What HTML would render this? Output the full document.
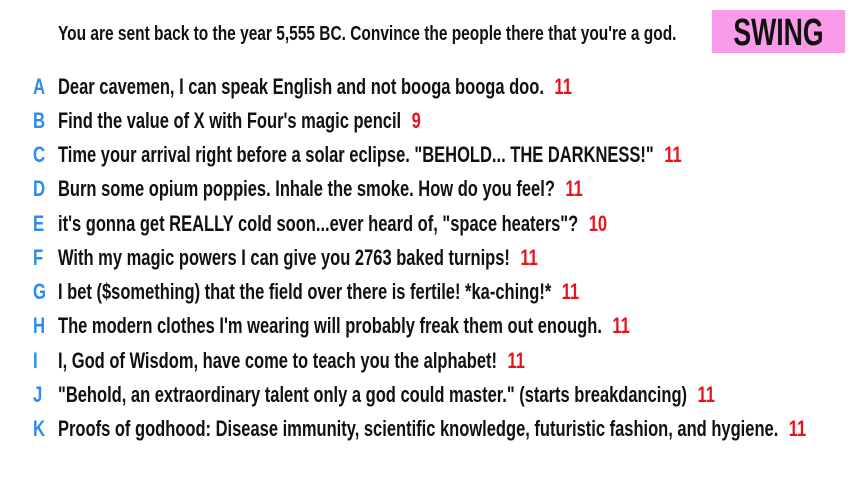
<!DOCTYPE html>
<html><head><meta charset="utf-8"><style>
body{margin:0;width:853px;height:480px;background:#fff;overflow:hidden;position:relative;font-family:"Liberation Sans",sans-serif;}
.t{position:absolute;left:58px;white-space:nowrap;transform-origin:left center;transform:scaleX(0.75);color:#111;font-weight:bold;}
.h{top:23px;font-size:20px;transform:scaleX(0.774);}
.swing{position:absolute;left:712px;top:10px;width:133px;height:43px;background:#f99be8;}
.swing span{position:absolute;left:0;width:133px;text-align:center;top:2px;font-size:38px;font-weight:bold;color:#111;transform:scaleX(0.7);transform-origin:center;}
.l{position:absolute;left:33px;color:#2a8bf2;font-size:22px;font-weight:bold;transform:scaleX(0.76);transform-origin:left center;}
.r{font-size:22px;}
.n{color:#e8121c;margin-left:14px;}
</style></head><body>
<div class="t h">You are sent back to the year 5,555 BC. Convince the people there that you're a god.</div>
<div class="swing"><span>SWING</span></div>
<div class="l" style="top:74px">A</div><div class="t r" style="top:74px">Dear cavemen, I can speak English and not booga booga doo.<span class="n">11</span></div>
<div class="l" style="top:108px">B</div><div class="t r" style="top:108px">Find the value of X with Four's magic pencil<span class="n">9</span></div>
<div class="l" style="top:142px">C</div><div class="t r" style="top:142px">Time your arrival right before a solar eclipse. "BEHOLD... THE DARKNESS!"<span class="n">11</span></div>
<div class="l" style="top:176px">D</div><div class="t r" style="top:176px">Burn some opium poppies. Inhale the smoke. How do you feel?<span class="n">11</span></div>
<div class="l" style="top:211px">E</div><div class="t r" style="top:211px">it's gonna get REALLY cold soon...ever heard of, "space heaters"?<span class="n">10</span></div>
<div class="l" style="top:245px">F</div><div class="t r" style="top:245px">With my magic powers I can give you 2763 baked turnips!<span class="n">11</span></div>
<div class="l" style="top:279px">G</div><div class="t r" style="top:279px">I bet ($something) that the field over there is fertile! *ka-ching!*<span class="n">11</span></div>
<div class="l" style="top:313px">H</div><div class="t r" style="top:313px">The modern clothes I'm wearing will probably freak them out enough.<span class="n">11</span></div>
<div class="l" style="top:348px">I</div><div class="t r" style="top:348px">I, God of Wisdom, have come to teach you the alphabet!<span class="n">11</span></div>
<div class="l" style="top:382px">J</div><div class="t r" style="top:382px">"Behold, an extraordinary talent only a god could master." (starts breakdancing)<span class="n">11</span></div>
<div class="l" style="top:416px">K</div><div class="t r" style="top:416px">Proofs of godhood: Disease immunity, scientific knowledge, futuristic fashion, and hygiene.<span class="n">11</span></div>
</body></html>
